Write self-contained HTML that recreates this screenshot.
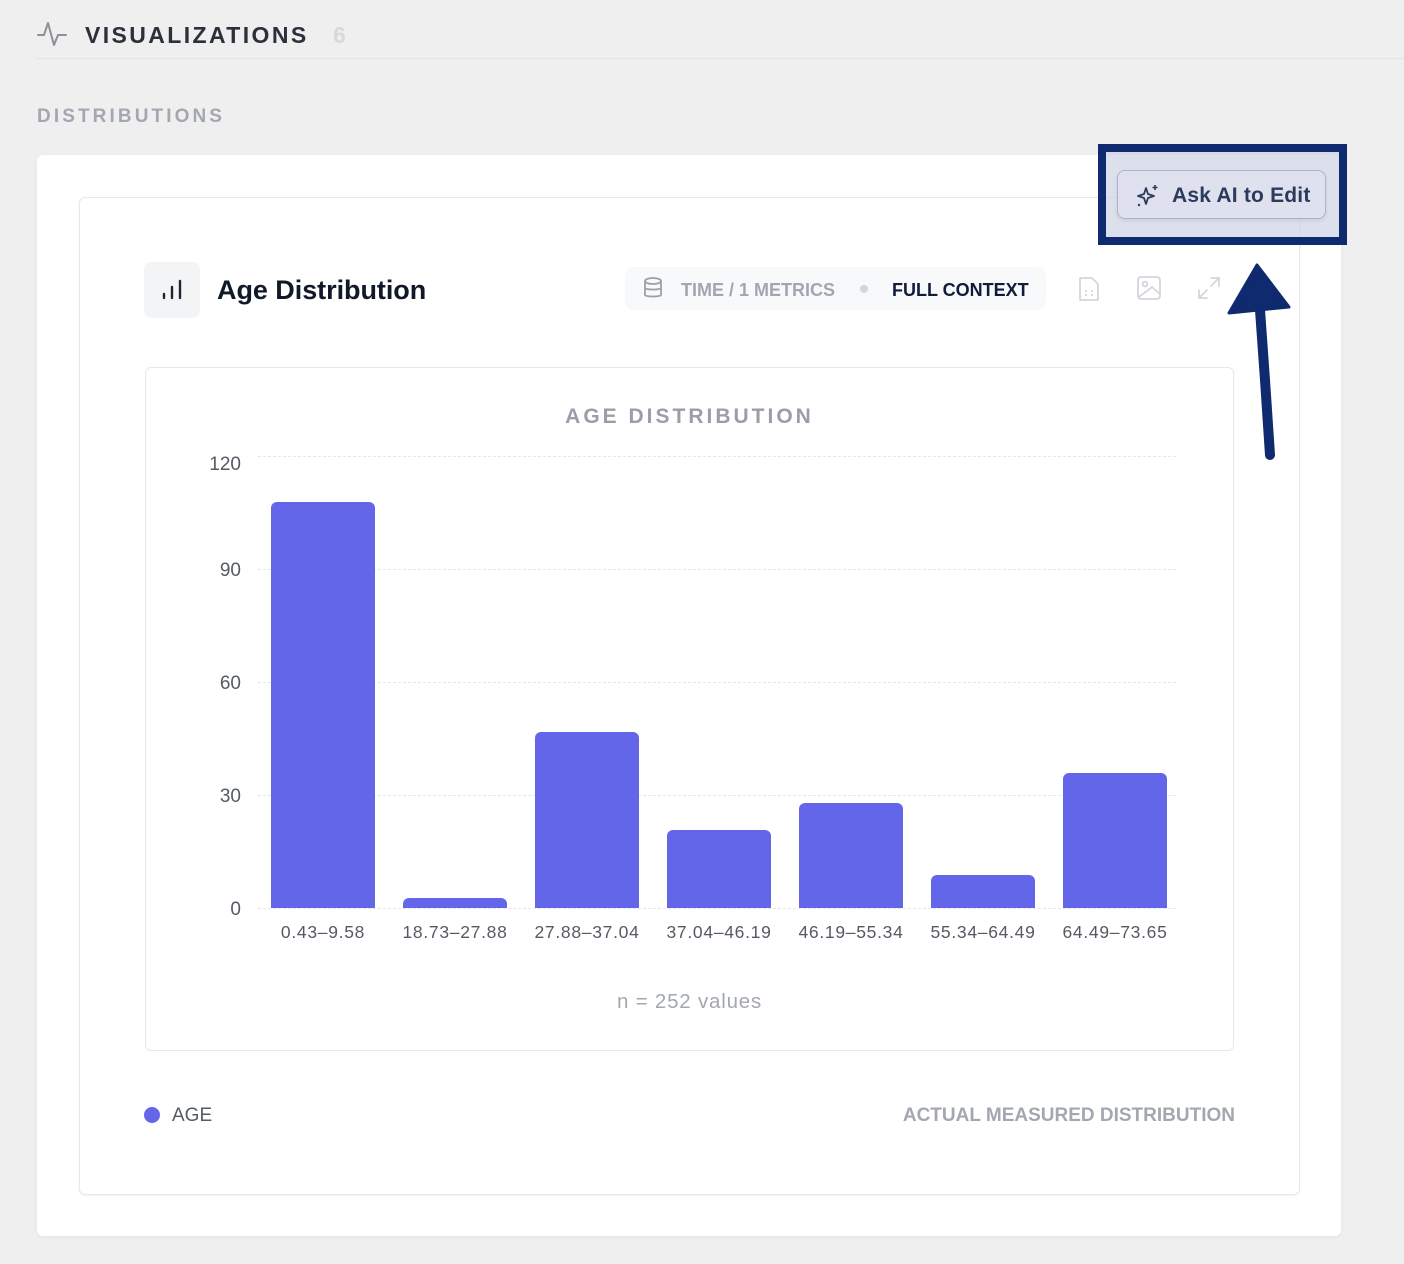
<!DOCTYPE html>
<html><head><meta charset="utf-8"><style>
*{margin:0;padding:0;box-sizing:border-box}
body{width:1404px;height:1264px;background:#efeff0;font-family:"Liberation Sans",sans-serif;position:relative;overflow:hidden}
.a{position:absolute}
.yl{position:absolute;width:60px;text-align:right;font-size:19px;color:#555a63;left:181px}
.xl{position:absolute;width:140px;text-align:center;font-size:17.5px;color:#555a63;top:922px;letter-spacing:.7px}
.bar{position:absolute;background:#6366e9;border-radius:6px 6px 0 0;width:104px}
.grid{position:absolute;left:258px;width:918px;border-top:1px dashed #e6e7ea;height:0}
</style></head><body>
<svg class="a" style="left:36px;top:18px" width="32" height="32" viewBox="0 0 32 32"><path d="M2 17 H8 L12 5 L18 27 L22 17 H30" fill="none" stroke="#8b909a" stroke-width="2" stroke-linecap="round" stroke-linejoin="round"/></svg>
<div class="a" style="left:85px;top:22px;font-size:23px;font-weight:bold;letter-spacing:2.4px;color:#2b303a">VISUALIZATIONS</div>
<div class="a" style="left:333px;top:22px;font-size:23px;font-weight:bold;color:#d6d8dc">6</div>
<div class="a" style="left:36px;top:58px;width:1368px;height:1px;background:#e3e4e7"></div>
<div class="a" style="left:37px;top:106px;font-size:19px;font-weight:bold;letter-spacing:3.1px;color:#a3a7b0">DISTRIBUTIONS</div>

<div class="a" style="left:37px;top:155px;width:1304px;height:1081px;background:#fff;border-radius:6px;box-shadow:0 1px 3px rgba(0,0,0,.06)"></div>
<div class="a" style="left:79px;top:197px;width:1221px;height:998px;background:#fff;border:1.5px solid #e6e7ea;border-radius:6px;box-shadow:0 1px 2px rgba(0,0,0,.05)"></div>

<div class="a" style="left:144px;top:262px;width:56px;height:56px;background:#f3f4f6;border-radius:8px"></div>
<svg class="a" style="left:160px;top:278px" width="24" height="24" viewBox="0 0 24 24"><path d="M4 20V16M12 20V9M20 20V3" stroke="#1d2433" stroke-width="2.4" stroke-linecap="round" fill="none"/></svg>
<div class="a" style="left:217px;top:275px;font-size:27px;font-weight:bold;color:#111827;letter-spacing:-.05px">Age Distribution</div>

<div class="a" style="left:625px;top:267px;width:421px;height:43px;background:#f8f9fb;border-radius:8px"></div>
<svg class="a" style="left:642px;top:276px" width="22" height="24" viewBox="0 0 22 24"><ellipse cx="11" cy="5" rx="8" ry="3" fill="none" stroke="#9ca0aa" stroke-width="1.8"/><path d="M3 5V19C3 21 19 21 19 19V5M3 12C3 14 19 14 19 12" fill="none" stroke="#9ca0aa" stroke-width="1.8"/></svg>
<div class="a" style="left:681px;top:280px;font-size:18px;font-weight:bold;color:#a2a6b0">TIME / 1 METRICS</div>
<div class="a" style="left:860px;top:285px;width:8px;height:8px;border-radius:50%;background:#d3d5da"></div>
<div class="a" style="left:892px;top:280px;font-size:18px;font-weight:bold;color:#111b3a">FULL CONTEXT</div>

<svg class="a" style="left:1077px;top:275px" width="24" height="28" viewBox="0 0 24 28"><path d="M3 3H15L21 9V25H3Z" fill="none" stroke="#d4d6db" stroke-width="1.8" stroke-linejoin="round"/><path d="M8 16H10M14 16H16M8 20H10M14 20H16" stroke="#d4d6db" stroke-width="1.8"/></svg>
<svg class="a" style="left:1136px;top:275px" width="26" height="26" viewBox="0 0 26 26"><rect x="2" y="2" width="22" height="22" rx="3" fill="none" stroke="#d4d6db" stroke-width="1.8"/><circle cx="9" cy="9" r="2.4" fill="none" stroke="#d4d6db" stroke-width="1.8"/><path d="M3 22L16 12L24 19" fill="none" stroke="#d4d6db" stroke-width="1.8"/></svg>
<svg class="a" style="left:1196px;top:275px" width="26" height="26" viewBox="0 0 26 26"><path d="M15 3H23V11M23 3L15 11M3 15V23H11M3 23L11 15" fill="none" stroke="#d4d6db" stroke-width="1.8" stroke-linecap="round"/></svg>

<div class="a" style="left:1098px;top:144px;width:249px;height:101px;border:8px solid #0f2a6e;background:rgba(205,211,230,.7)"></div>
<div class="a" style="left:1117px;top:170px;width:209px;height:49px;border:1.5px solid #aeb4c8;border-radius:8px;background:#dfe2ee;box-shadow:0 2px 4px rgba(0,0,0,.08)"></div>
<svg class="a" style="left:1135px;top:183px" width="26" height="26" viewBox="0 0 26 26"><path d="M11 5L13 11L19 13L13 15L11 21L9 15L3 13L9 11Z" fill="none" stroke="#2d3a5c" stroke-width="1.8" stroke-linejoin="round"/><path d="M20 2V7M17.5 4.5H22.5" stroke="#2d3a5c" stroke-width="1.6"/><circle cx="4" cy="22" r="1.2" fill="#2d3a5c"/></svg>
<div class="a" style="left:1172px;top:184px;font-size:21px;font-weight:bold;color:#2d3a5c;letter-spacing:.2px">Ask AI to Edit</div>

<svg class="a" style="left:0;top:0" width="1404" height="1264"><path d="M1257 265 L1229 313 L1289 307 Z" fill="#0f2a6e" stroke="#0f2a6e" stroke-width="3" stroke-linejoin="round"/><path d="M1260 310 L1265 380 L1270 455" fill="none" stroke="#0f2a6e" stroke-width="10" stroke-linecap="round"/></svg>

<div class="a" style="left:145px;top:367px;width:1089px;height:684px;border:1.5px solid #e6e7ea;border-radius:6px"></div>
<div class="a" style="left:145px;top:405px;width:1089px;text-align:center;font-size:21px;font-weight:bold;letter-spacing:3px;color:#9a9ea8">AGE DISTRIBUTION</div>

<div class="grid" style="top:456px"></div>
<div class="grid" style="top:569px"></div>
<div class="grid" style="top:682px"></div>
<div class="grid" style="top:795px"></div>
<div class="grid" style="top:908px"></div>
<div class="yl" style="top:454px">120</div>
<div class="yl" style="top:560px">90</div>
<div class="yl" style="top:673px">60</div>
<div class="yl" style="top:786px">30</div>
<div class="yl" style="top:899px">0</div>

<div class="bar" style="left:271px;top:502px;height:406px"></div>
<div class="bar" style="left:403px;top:898px;height:10px"></div>
<div class="bar" style="left:535px;top:732px;height:176px"></div>
<div class="bar" style="left:667px;top:830px;height:78px"></div>
<div class="bar" style="left:799px;top:803px;height:105px"></div>
<div class="bar" style="left:931px;top:875px;height:33px"></div>
<div class="bar" style="left:1063px;top:773px;height:135px"></div>

<div class="xl" style="left:253px">0.43–9.58</div>
<div class="xl" style="left:385px">18.73–27.88</div>
<div class="xl" style="left:517px">27.88–37.04</div>
<div class="xl" style="left:649px">37.04–46.19</div>
<div class="xl" style="left:781px">46.19–55.34</div>
<div class="xl" style="left:913px">55.34–64.49</div>
<div class="xl" style="left:1045px">64.49–73.65</div>

<div class="a" style="left:145px;top:990px;width:1089px;text-align:center;font-size:20.5px;color:#a3a7b0;letter-spacing:.8px">n = 252 values</div>

<div class="a" style="left:144px;top:1107px;width:16px;height:16px;border-radius:50%;background:#6366e9"></div>
<div class="a" style="left:172px;top:1105px;font-size:19px;color:#555a63">AGE</div>
<div class="a" style="left:860px;top:1105px;width:375px;text-align:right;font-size:19px;font-weight:bold;color:#a3a7b0">ACTUAL MEASURED DISTRIBUTION</div>
</body></html>
